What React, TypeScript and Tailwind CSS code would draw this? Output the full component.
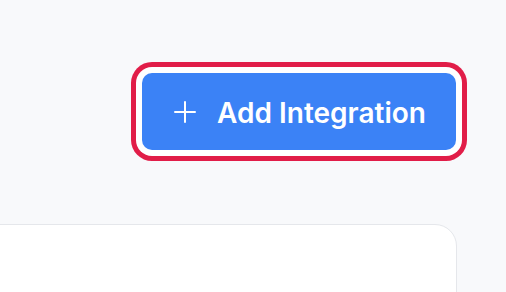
import React from "react";

const PlusIcon = () => (
  <svg
    width="22"
    height="22"
    viewBox="0 0 22 22"
    fill="none"
    stroke="currentColor"
    strokeWidth="2"
    strokeLinecap="round"
  >
    <path d="M11 1v20" />
    <path d="M1 11h20" />
  </svg>
);

const App: React.FC = () => {
  return (
    <div
      className="h-screen w-full overflow-hidden bg-[#f8f9fb]"
      style={{ fontFamily: "Inter, 'Noto Sans', sans-serif" }}
    >
      <div className="flex flex-col pr-[49px] pt-[73px]">
        <div className="flex justify-end pr-px">
          <button className="flex h-[77px] w-[314px] items-center justify-center gap-[21px] rounded-[10px] bg-[#3b82f6] pl-[2px] text-white ring-[5px] ring-[#e11d48] ring-offset-[6px] ring-offset-white">
            <PlusIcon />
            <span className="mt-[2px] text-[28px] font-semibold">
              Add Integration
            </span>
          </button>
        </div>
        <div className="-ml-10 mt-[74px] h-[120px] rounded-tr-[22px] border border-[#e5e7eb] bg-white" />
      </div>
    </div>
  );
};

export default App;
